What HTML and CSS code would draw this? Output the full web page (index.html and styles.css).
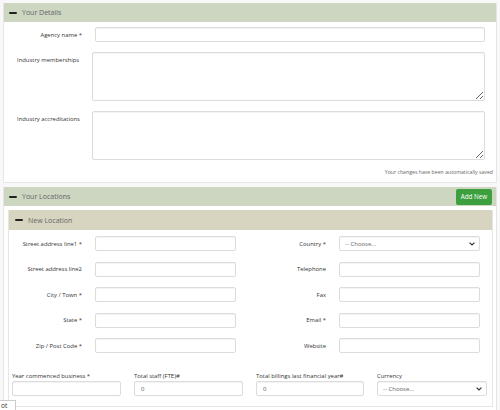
FILE: index.html
```html
<!DOCTYPE html>
<html>
<head>
<meta charset="utf-8">
<link rel="stylesheet" href="styles.css">
</head>
<body>
<div class="panel details">
  <div class="panel-head"><span class="minus"></span><span class="title">Your Details</span></div>
  <div class="details-body">
    <div class="row-input">
      <label class="lbl-right">Agency name *</label>
      <input class="field agency" type="text">
    </div>
    <div class="row-area">
      <label class="lbl-left">Industry memberships</label>
      <textarea class="field area"></textarea>
    </div>
    <div class="row-area">
      <label class="lbl-left">Industry accreditations</label>
      <textarea class="field area"></textarea>
    </div>
    <div class="saved">Your changes have been automatically saved</div>
  </div>
</div>

<div class="panel locations">
  <div class="panel-head"><span class="minus"></span><span class="title">Your Locations</span><button class="btn-add">Add New</button></div>
  <div class="sub-panel">
    <div class="sub-head"><span class="minus"></span><span class="title">New Location</span></div>
    <div class="loc-grid">
      <label class="lbl-right">Street address line1 *</label><input class="field" type="text">
      <label class="lbl-right">Country *</label><div class="field select"><span>-- Choose...</span><span class="chev"><svg width="6" height="4" viewBox="0 0 6 4"><path d="M0.6 0.6 L3 3 L5.4 0.6" fill="none" stroke="#333" stroke-width="1.2"/></svg></span></div>
      <label class="lbl-right">Street address line2</label><input class="field" type="text">
      <label class="lbl-right">Telephone</label><input class="field" type="text">
      <label class="lbl-right">City / Town *</label><input class="field" type="text">
      <label class="lbl-right">Fax</label><input class="field" type="text">
      <label class="lbl-right">State *</label><input class="field" type="text">
      <label class="lbl-right">Email *</label><input class="field" type="text">
      <label class="lbl-right">Zip / Post Code *</label><input class="field" type="text">
      <label class="lbl-right">Website</label><input class="field" type="text">
    </div>
    <div class="bottom-row">
      <div class="col c1"><label>Year commenced business *</label><input class="field" type="text"></div>
      <div class="col c2"><label>Total staff (FTE)#</label><div class="field num">0</div></div>
      <div class="col c3"><label>Total billings last financial year#</label><div class="field num">0</div></div>
      <div class="col c4"><label>Currency</label><div class="field select"><span>-- Choose...</span><span class="chev"><svg width="6" height="4" viewBox="0 0 6 4"><path d="M0.6 0.6 L3 3 L5.4 0.6" fill="none" stroke="#333" stroke-width="1.2"/></svg></span></div></div>
    </div>
  </div>
</div>

<div class="tip">ot</div>
</body>
</html>
```

FILE: styles.css
```css
* { box-sizing: border-box; }
html, body { margin: 0; padding: 0; overflow: hidden; }
body {
  background: #f8f8f8;
  font-family: "Open Sans", "Liberation Sans", sans-serif;
  color: #333;
  width: 500px;
  height: 410px;
  padding-top: 3px;
}
.panel {
  margin: 0 3px 4px 3px;
  background: #fff;
  border: 1px solid #e6e6e6;
  border-top: none;
}
.panel-head {
  height: 19px;
  background: #cdd6c1;
  display: flex;
  align-items: center;
  padding-left: 5px;
  padding-right: 4px;
}
.minus {
  display: inline-block;
  width: 8px;
  height: 2px;
  background: #222;
  border-radius: 1px;
}
.title {
  font-size: 7px;
  color: #666;
  margin-left: 5px;
}
.details-body {
  padding: 5px 0 6px 0;
}
.field {
  border: 1px solid #dcdcdc;
  border-radius: 2px;
  background: #fff;
  box-shadow: inset 0 1px 1px rgba(0,0,0,0.05);
  height: 15px;
  margin: 0;
  padding: 0 4px;
  font-family: inherit;
  font-size: 6px;
  color: #666;
  outline: none;
}
label {
  font-size: 5.9px;
  color: #333;
}
.row-input {
  display: flex;
  align-items: center;
}
.lbl-right {
  text-align: right;
}
.row-input .lbl-right {
  width: 78px;
  margin-right: 13px;
}
.agency { width: 390px; }
.row-area {
  display: flex;
  align-items: flex-start;
  margin-top: 10px;
}
.lbl-left {
  width: 88px;
  padding-left: 13px;
  margin-top: 4px;
}
.area {
  width: 393px;
  height: 49px;
  resize: vertical;
}
.saved {
  font-size: 5.2px;
  color: #666;
  text-align: right;
  padding-right: 3px;
  margin-top: 8px;
}
.locations {
  padding-bottom: 6px;
}
.btn-add {
  margin-left: auto;
  height: 16px;
  width: 36px;
  padding: 0;
  border: none;
  border-radius: 2px;
  background: #3e9f3e;
  color: #fff;
  font-family: inherit;
  font-size: 6.3px;
}
.sub-panel {
  margin: 4px 3px 0 4px;
  border: 1px solid #e6e6e6;
  border-top: none;
  padding-bottom: 10px;
}
.sub-head {
  height: 20px;
  background: #d7d5c0;
  display: flex;
  align-items: center;
  padding-left: 6px;
}
.loc-grid {
  display: grid;
  grid-template-columns: 73px 141px 77px 141px;
  column-gap: 13px;
  row-gap: 10.5px;
  align-items: center;
  padding-top: 6px;
}
.loc-grid .field { width: 141px; }
.select {
  display: flex;
  align-items: center;
  justify-content: space-between;
  padding: 0 4px 0 5px;
}
.chev { display: flex; }
.bottom-row {
  display: flex;
  gap: 13px;
  padding-left: 3px;
  margin-top: 19px;
}
.col {
  display: flex;
  flex-direction: column;
}
.c1, .c2 { width: 109px; }
.c3 { width: 108px; }
.c4 { width: 110px; }
.col label { margin-bottom: 1px; line-height: 8px; }
.col .field { width: 100%; }
.num {
  padding-left: 6px;
  display: flex;
  align-items: center;
  color: #555;
}
.tip {
  position: fixed;
  left: 0;
  bottom: 0;
  width: 16px;
  height: 10px;
  background: #fff;
  border: 1px solid #ccc;
  border-left: none;
  border-bottom: none;
  font-size: 6.5px;
  line-height: 9px;
  padding-left: 1px;
  color: #333;
}
```
